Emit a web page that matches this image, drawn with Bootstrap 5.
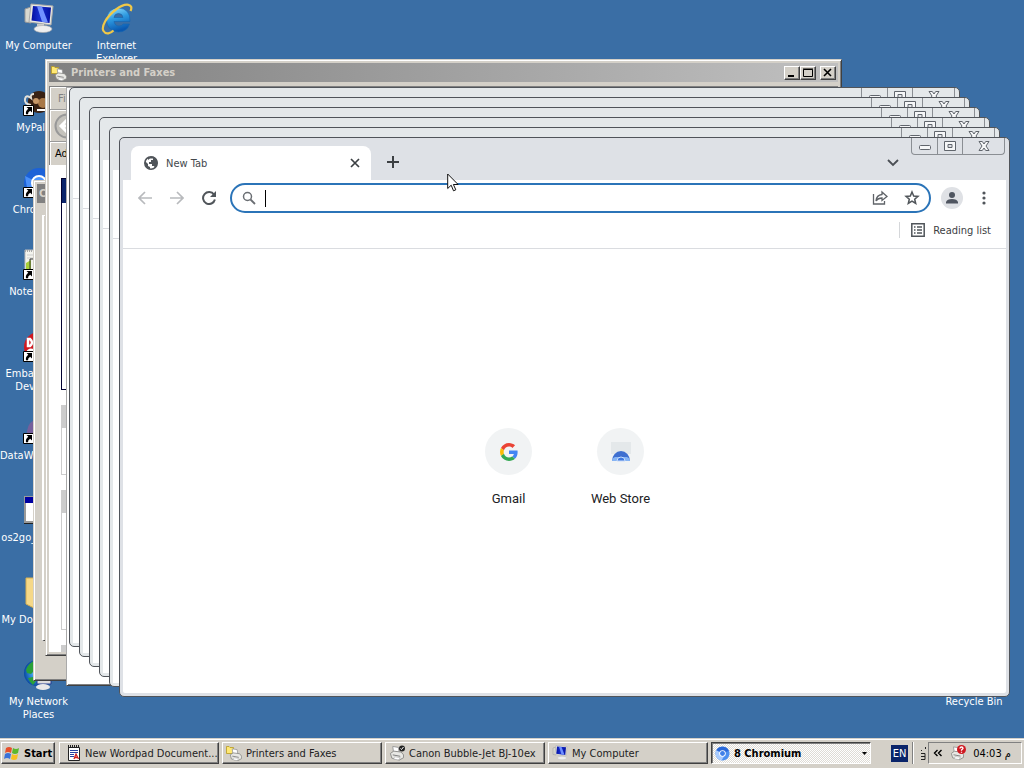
<!DOCTYPE html>
<html lang="en">
<head>
<meta charset="utf-8">
<meta name="viewport" content="width=device-width, initial-scale=1">
<title>Desktop</title>
<link href="https://cdn.jsdelivr.net/npm/bootstrap@5.3.0/dist/css/bootstrap.min.css" rel="stylesheet">
<style>
:root{--face:#d4d0c8;--desk:#3a6ea5;--ink:#3c4043}
body{font:11px/13px "DejaVu Sans Condensed","DejaVu Sans",sans-serif;color:#000;background:var(--desk)}
button,input{font:inherit;color:inherit}
button{padding:0;border:0;background:none}
svg{display:block;flex:none}
a{color:inherit;text-decoration:none}
/* desktop icons */
.icon-grid{display:grid;grid-template-rows:repeat(9,82px);grid-auto-columns:78px;grid-auto-flow:column;padding-top:3px;color:#fff}
.icon-grid a{text-align:center;width:77px}
.icon-grid svg{margin:0 auto 4px}
.icon-grid span{display:block}
.bin{right:11px;bottom:31px;width:78px;color:#fff;text-align:center}
/* classic windows */
.classic{position:absolute;background:var(--face);border:1px solid;border-color:var(--face) #404040 #404040 var(--face);box-shadow:inset 1px 1px #fff,inset -1px -1px #808080;padding:3px}
.titlebar{height:19px;flex:none;background:linear-gradient(90deg,#808080,#c0c0c0);color:#d4d0c8;font-weight:700;padding:0 2px}
.cap{width:16px;height:14px;background:var(--face);border:1px solid;border-color:#fff #404040 #404040 #fff;box-shadow:inset -1px -1px #808080}
.canon{left:33px;top:180px;bottom:58px;width:700px}
.canon .pane{margin:12px 5px 36px;border:1px solid;border-color:#fff #404040 #404040 #fff;border-left-width:2px}
.printers{left:45px;top:59px;right:182px;bottom:83px}
.menurow{height:24px;flex:none;padding-left:8px;color:#808080;border:1px solid #808080;border-bottom-color:#999;box-shadow:inset 1px 1px #fff}
.toolrow{height:32px;flex:none;padding-left:4px;border-left:1px solid #808080;border-bottom:1px solid #999;box-shadow:inset 1px 1px #fff}
.addrrow{height:23px;flex:none;padding-left:5px;border-left:1px solid #808080;box-shadow:inset 1px 1px #fff}
.throb{width:42px;align-self:stretch;background:#fff;border-left:1px solid #999}
.folder{background:#fff;padding:13px 12px 3px}
.tasks{width:190px;border:1px solid #000030;height:212px}
.tasks div{height:24px;background:#0a246a}
.pod{width:190px;border:1px solid #ccc;height:70px;margin-top:15px}
.pod.tall{height:140px}
.pod div{height:22px;background:#ccc}
.plain{left:66px;top:87px;right:100px;bottom:53px;padding:2px;background:#fff;border-color:#aaa #404040 #404040 #aaa}
/* browser windows */
.chromium{--back:50px;--frame:#e4e8ea;position:absolute;left:calc(119px - var(--back));top:calc(137px - var(--back));right:calc(14px + var(--back));bottom:calc(42px + var(--back));border:1px solid #50545a;border-radius:5px;background:var(--frame);padding:0 3px 3px}
.cascade>:nth-child(2){--back:40px}
.cascade>:nth-child(3){--back:30px}
.cascade>:nth-child(4){--back:20px}
.cascade>:nth-child(5){--back:10px}
.cascade>:nth-child(6){--back:0px;--frame:#dee1e6}
.strip{height:42px;padding-left:8px}
.winctl{right:4px;top:0;height:17px;border:1px solid #8a8e93;border-top:0;border-radius:0 0 4px 4px}
.winctl button{width:25px}
.winctl button:last-child{width:42px}
.winctl button+button{border-left:1px solid #8a8e93}
.tabpage{width:240px;height:34px;background:#fff;border-radius:8px 8px 0 0;padding:0 10px 0 13px;color:#44484c}
.tabmenu{margin-right:107px}
.tools{height:36px;background:#fff;padding:0 6px}
.tools .sq{width:32px;height:32px;display:flex;align-items:center;justify-content:center}
.omni{height:30px;border:2px solid #2b74b8;border-radius:15px;padding:0 1px 0 10px;margin:0 10px 0 5px}
.omni input{border:0;outline:0;background:none;min-width:0;font-size:13px}
.caret{width:1px;height:17px;background:#000;margin-left:9px}
.person{width:22px;height:22px;border-radius:50%;background:#dfe1e5;margin-right:5px}
.marks{height:33px;background:#fff;border-bottom:1px solid #dadce0;padding-right:15px;padding-bottom:4px;color:var(--ink)}
.marks button{border-left:1px solid #d5d7da;height:16px;padding-left:11px}
.pagebody{background:#fff;border-radius:0 0 2px 2px;padding-top:179px}
.tile{width:112px;font:13px/16px Roboto,sans-serif;color:#202124}
.disc{width:47px;height:47px;border-radius:50%;background:#f1f3f4;margin-bottom:16px}
.pointer{left:447px;top:173px}
/* taskbar */
.taskbar{height:29px;background:var(--face);border-top:1px solid #fff;padding:2px 2px 4px 1px;box-shadow:0 -1px var(--face)}
.tb{height:22px;border:1px solid;border-color:#fff #404040 #404040 #fff;box-shadow:inset -1px -1px #808080;padding:0 3px;color:#222}
.tb.start{width:54px;font-weight:700;padding:0 2px;color:#000}
.tasklist{gap:3px;min-width:0}
.tb.task{flex:0 1 160px;min-width:0}
.tb.on{border-color:#404040 #fff #fff #404040;box-shadow:inset 1px 1px #808080;background:repeating-conic-gradient(#fff 0 25%,#dedbd5 0 50%) 0 0/2px 2px;font-weight:700;color:#000}
.lang{background:#0a246a;color:#fff;width:17px;height:17px;line-height:17px;text-align:center}
.rule{width:2px;height:22px;border-left:1px solid #808080;border-right:1px solid #fff}
.tray{height:22px;width:94px;border:1px solid;border-color:#808080 #fff #fff #808080;padding:0 10px 0 4px}
</style>
</head>
<body>
<svg width="0" height="0" class="position-absolute" aria-hidden="true">
<defs>
<linearGradient id="scr" x2="1"><stop stop-color="#0410a0"/><stop offset=".4" stop-color="#1830d0"/><stop offset="1" stop-color="#0410a0"/></linearGradient>
<linearGradient id="ieb" x2=".3" y2="1"><stop stop-color="#9be4ff"/><stop offset=".5" stop-color="#2e9ae0"/><stop offset="1" stop-color="#0a58b0"/></linearGradient>
<radialGradient id="earth"><stop stop-color="#d8f4ff"/><stop offset=".4" stop-color="#3a9ae8"/><stop offset="1" stop-color="#0a4aa0"/></radialGradient>
<symbol id="arrowlink" viewBox="0 0 11 11"><path fill="#fff" stroke="#000" d="M.5.5h10v10H.5z"/><path d="M3.500 2H9v5.500L7.200 5.700Q4.800 7 5 9.300H3Q2.200 6 5.300 3.800z"/></symbol>
<symbol id="pc" viewBox="0 0 32 32"><path fill="#d8d8d0" stroke="#999" d="M2 6l6-2v16l-6-1z"/><path fill="#e8e8e0" stroke="#aaa" d="M8 1l22 2-2 19-22-3z"/><path fill="url(#scr)" d="M10 3l18 1.500L26.500 20 8.500 17.500z"/><path fill="#7090ff" d="M14 3.300l5 .5 6 15.800-6-.8z"/><path fill="#ccc" d="M14 21h7v5h-7z"/><ellipse cx="20" cy="26" rx="9" ry="3.500" fill="#eee" stroke="#aaa" stroke-width=".6"/></symbol>
<symbol id="printer" viewBox="0 0 16 16"><path fill="#fff" stroke="#999" d="M4 1l6 1 1 6-6 1z"/><path fill="#e8e8e4" stroke="#8a8a86" d="M1.500 8.500L5 6l8 1 2.500 3v3L11 15.500l-8-2z"/><path stroke="#777" d="M4 10l8 1.500"/><path fill="#fff" stroke="#aaa" stroke-width=".6" d="M6 12l6 1-2 2.500-5-1z"/></symbol>
<symbol id="folderprinter" viewBox="0 0 16 16"><path fill="#ffe874" stroke="#b89a20" stroke-width=".8" d="M.5 1.500H3l1 1h3.500v6h-7z"/><use href="#printer" x="3" y="3" width="13" height="13"/></symbol>
<symbol id="minus" viewBox="0 0 14 12"><path fill="#000" d="M3 8h6v2H3z"/></symbol>
<symbol id="wmin" viewBox="0 0 12 12"><rect x=".5" y="5.500" width="11" height="4" rx="1" fill="#f6f7f8" stroke="#60656c"/></symbol>
<symbol id="wmax" viewBox="0 0 12 12"><path fill="#f6f7f8" fill-rule="evenodd" stroke="#60656c" d="M.5 1.500h11v9H.500zM4 4.500h4v3H4z"/></symbol>
<symbol id="wx" viewBox="0 0 12 12"><path fill="#f6f7f8" stroke="#60656c" d="M1 1.500h3.300L6 4l1.700-2.500H11L8 6l3 4.500H7.700L6 8l-1.700 2.500H1L4 6z"/></symbol>
<symbol id="chrom" viewBox="0 0 16 16"><circle cx="8" cy="8" r="7.500" fill="#4c8ff0"/><path fill="#a8cbff" d="M8 8L1.500 4.500A7.500 7.500 0 0 0 7 15.400l3-5z"/><path fill="#2a68d8" d="M8 8L1.500 4.300A7.500 7.500 0 0 1 14.700 5z"/><circle cx="8" cy="8" r="3.500" fill="#fff"/><circle cx="8" cy="8" r="2.600" fill="#4080e8"/></symbol>
</defs></svg>

<div class="vh-100 d-flex flex-column overflow-hidden">
<main class="position-relative flex-grow-1 overflow-hidden">
<nav class="icon-grid" aria-label="Desktop icons">
<a href="#"><svg width="32" height="32"><use href="#pc"/></svg><span>My Computer</span></a>
<a href="#"><svg width="32" height="32" viewBox="0 0 32 32"><circle cx="16" cy="17" r="11" fill="#3a2214"/><circle cx="20" cy="18" r="5" fill="#a87848"/><circle cx="13" cy="16" r="3" fill="#c89868"/><path fill="none" stroke="#e4e0d8" stroke-width="2" d="M8 20q-7-1-6-6t6-1q-1-4 3-4"/><path stroke="#fff" stroke-width="2" d="M14 25h8"/><use href="#arrowlink" y="20" width="11" height="11"/></svg><span>MyPal 68</span></a>
<a href="#"><svg width="32" height="32" viewBox="0 0 32 32"><circle cx="16" cy="16" r="15" fill="#1c62d8"/><path fill="#4a90f8" d="M16 16L2 9l3 18z"/><circle cx="16" cy="16" r="7" fill="#4d96ff" stroke="#fff" stroke-width="2"/><use href="#arrowlink" y="20" width="11" height="11"/></svg><span>Chromium</span></a>
<a href="#"><svg width="32" height="32" viewBox="0 0 32 32"><path fill="#f4f4ee" stroke="#bbb" d="M2 1h24v29H2z"/><path stroke="#aaa" stroke-dasharray="1 1" stroke-width="2" d="M2 2h24"/><path stroke="#ccc" d="M4 6h20M4 9h20"/><path fill="#a8d038" d="M3 14l5-3v10H3z"/><path fill="none" stroke="#333" d="M7 21V10h6"/><use href="#arrowlink" y="20" width="11" height="11"/></svg><span>Notepad++</span></a>
<a href="#"><svg width="32" height="32" viewBox="0 0 32 32"><circle cx="16" cy="16" r="15" fill="#d01820"/><path fill="none" stroke="#fff" stroke-width="2.500" d="M5 8v7h2q4-3.500 0-7zM11 20q-5-3-7 2"/><use href="#arrowlink" y="20" width="11" height="11"/></svg><span>Embarcadero Dev-C++</span></a>
<a href="#"><svg width="32" height="32" viewBox="0 0 32 32"><path fill="#74609c" d="M4 18Q5 8 16 5v22H4z"/><use href="#arrowlink" y="20" width="11" height="11"/></svg><span>DataWarehouse</span></a>
<a href="#"><svg width="32" height="32" viewBox="0 0 32 32"><path fill="#fff" stroke="#999" stroke-width="2" d="M2 2h28v25H2z"/><path fill="#0000a0" d="M2 2h28v6H2z"/><path stroke="#222" d="M1 28.500h30"/></svg><span>os2go_desktop</span></a>
<a href="#"><svg width="32" height="32" viewBox="0 0 32 32"><path fill="#f5d888" stroke="#d8b050" d="M3 1h26v25l-18 5-8-4z"/></svg><span>My Documents</span></a>
<a href="#"><svg width="32" height="32" viewBox="0 0 32 32"><circle cx="14" cy="14" r="13" fill="url(#earth)"/><path fill="#2aa038" d="M3 11Q5 4 13 1l-3 6 2 4-4 4-4-1zM5 19l5-1 3 4-3 4q-3-2-5-7z"/><path fill="#ddd" stroke="#223a90" d="M14 20h14v5H14z"/><ellipse cx="20" cy="28" rx="7" ry="3" fill="#e8e8e8"/></svg><span>My Network Places</span></a>
<a href="#"><svg width="32" height="32" viewBox="0 0 32 32"><path fill="url(#ieb)" stroke="#1464b0" stroke-width=".6" fill-rule="evenodd" d="M29 18.500H13q1 4.500 5 4.500 3 0 4.200-2h6.300Q26 29 17.500 29 6 28 5.500 17 6 5.500 17.500 5 29.500 5.500 29 18.500zM13 14.500h9Q21.500 10.500 17.500 10.500T13 14.500z"/><path fill="none" stroke="#f0c848" stroke-width="2.200" d="M29.500 8C33 1 25-1 15 6.500S0 24 2.500 28s7 2.500 10-.5"/></svg><span>Internet Explorer</span></a>
</nav>
<a href="#" class="bin position-absolute">Recycle Bin</a>

<section class="classic canon d-flex flex-column" aria-label="Canon Bubble-Jet BJ-10ex">
<div class="titlebar d-flex align-items-center"><span>Canon Bubble-Jet BJ-10ex</span></div>
<div class="pane flex-grow-1"></div>
</section>

<section class="classic printers d-flex flex-column" aria-label="Printers and Faxes">
<div class="titlebar d-flex align-items-center"><svg width="16" height="16" class="me-1"><use href="#folderprinter"/></svg><span class="flex-grow-1">Printers and Faxes</span>
<button class="cap" aria-label="Minimize"><svg width="14" height="12"><use href="#minus"/></svg></button><button class="cap" aria-label="Maximize"><svg width="14" height="12" viewBox="0 0 14 12"><path fill="none" stroke="#000" d="M2.500 2.500h9v7h-9zM2 2h10"/></svg></button><button class="cap ms-1" aria-label="Close"><svg width="14" height="12" viewBox="0 0 14 12"><path stroke="#000" stroke-width="1.600" d="M3 2l7 7M10 2l-7 7"/></svg></button></div>
<div class="menurow d-flex align-items-center mt-1"><span class="flex-grow-1">File</span><span class="throb"></span></div>
<div class="toolrow d-flex align-items-center"><svg width="26" height="26" viewBox="0 0 26 26"><circle cx="13" cy="13" r="11.500" fill="#c4c2bc" stroke="#999" stroke-width="2"/><path fill="none" stroke="#fff" stroke-width="3" d="M14 6l-7 7 7 7M7 13h13"/></svg></div>
<div class="addrrow d-flex align-items-center">Address</div>
<div class="folder flex-grow-1 overflow-hidden"><div class="tasks"><div></div></div><div class="pod"><div></div></div><div class="pod tall"><div></div></div><div class="pod"><div></div></div></div>
</section>

<div class="classic plain"></div>

<div class="cascade">
<section class="chromium d-flex flex-column"><div class="strip"><div class="winctl position-absolute d-flex"><button tabindex="-1" aria-label="Minimize" class="d-flex justify-content-center align-items-center"><svg width="12" height="12"><use href="#wmin"/></svg></button><button tabindex="-1" aria-label="Maximize" class="d-flex justify-content-center align-items-center"><svg width="12" height="12"><use href="#wmax"/></svg></button><button tabindex="-1" aria-label="Close" class="d-flex justify-content-center align-items-center"><svg width="12" height="12"><use href="#wx"/></svg></button></div></div><div class="tools"></div><div class="marks"></div><div class="bg-white flex-grow-1"></div></section>
<section class="chromium d-flex flex-column"><div class="strip"><div class="winctl position-absolute d-flex"><button tabindex="-1" aria-label="Minimize" class="d-flex justify-content-center align-items-center"><svg width="12" height="12"><use href="#wmin"/></svg></button><button tabindex="-1" aria-label="Maximize" class="d-flex justify-content-center align-items-center"><svg width="12" height="12"><use href="#wmax"/></svg></button><button tabindex="-1" aria-label="Close" class="d-flex justify-content-center align-items-center"><svg width="12" height="12"><use href="#wx"/></svg></button></div></div><div class="tools"></div><div class="marks"></div><div class="bg-white flex-grow-1"></div></section>
<section class="chromium d-flex flex-column"><div class="strip"><div class="winctl position-absolute d-flex"><button tabindex="-1" aria-label="Minimize" class="d-flex justify-content-center align-items-center"><svg width="12" height="12"><use href="#wmin"/></svg></button><button tabindex="-1" aria-label="Maximize" class="d-flex justify-content-center align-items-center"><svg width="12" height="12"><use href="#wmax"/></svg></button><button tabindex="-1" aria-label="Close" class="d-flex justify-content-center align-items-center"><svg width="12" height="12"><use href="#wx"/></svg></button></div></div><div class="tools"></div><div class="marks"></div><div class="bg-white flex-grow-1"></div></section>
<section class="chromium d-flex flex-column"><div class="strip"><div class="winctl position-absolute d-flex"><button tabindex="-1" aria-label="Minimize" class="d-flex justify-content-center align-items-center"><svg width="12" height="12"><use href="#wmin"/></svg></button><button tabindex="-1" aria-label="Maximize" class="d-flex justify-content-center align-items-center"><svg width="12" height="12"><use href="#wmax"/></svg></button><button tabindex="-1" aria-label="Close" class="d-flex justify-content-center align-items-center"><svg width="12" height="12"><use href="#wx"/></svg></button></div></div><div class="tools"></div><div class="marks"></div><div class="bg-white flex-grow-1"></div></section>
<section class="chromium d-flex flex-column"><div class="strip"><div class="winctl position-absolute d-flex"><button tabindex="-1" aria-label="Minimize" class="d-flex justify-content-center align-items-center"><svg width="12" height="12"><use href="#wmin"/></svg></button><button tabindex="-1" aria-label="Maximize" class="d-flex justify-content-center align-items-center"><svg width="12" height="12"><use href="#wmax"/></svg></button><button tabindex="-1" aria-label="Close" class="d-flex justify-content-center align-items-center"><svg width="12" height="12"><use href="#wx"/></svg></button></div></div><div class="tools"></div><div class="marks"></div><div class="bg-white flex-grow-1"></div></section>

<section class="chromium d-flex flex-column" aria-label="New Tab - Chromium">
<div class="strip d-flex align-items-end">
<div class="tabpage d-flex align-items-center"><svg width="14" height="14" viewBox="0 0 14 14"><circle cx="7" cy="7" r="6.200" fill="#fff" stroke="#50555a" stroke-width="1.600"/><path fill="#50555a" d="M1 5l3 3v2l2 1v2.500Q0 12 1 5zM4 1.500L9 .5q5 2 4.500 7-.5 3-2.500 4.500L10 10H8V8H5V6h2V4h2V2.500H6L4 4z"/></svg><span class="flex-grow-1 ms-2">New Tab</span><button aria-label="Close tab"><svg width="12" height="12" viewBox="0 0 12 12"><path stroke="#3c4043" stroke-width="1.700" d="M2 2l8 8M10 2l-8 8"/></svg></button></div>
<button class="ms-3 mb-2 pb-1" aria-label="New tab"><svg width="12" height="12" viewBox="0 0 12 12"><path stroke="#3c4043" stroke-width="2" d="M6 0v12M0 6h12"/></svg></button>
<button class="tabmenu ms-auto mb-2 pb-1" aria-label="Search tabs"><svg width="12" height="10" viewBox="0 0 12 10"><path fill="none" stroke="#4a4e54" stroke-width="1.800" d="M1 2l5 5 5-5"/></svg></button>
<div class="winctl position-absolute d-flex"><button aria-label="Minimize" class="d-flex justify-content-center align-items-center"><svg width="12" height="12"><use href="#wmin"/></svg></button><button aria-label="Maximize" class="d-flex justify-content-center align-items-center"><svg width="12" height="12"><use href="#wmax"/></svg></button><button aria-label="Close" class="d-flex justify-content-center align-items-center"><svg width="12" height="12"><use href="#wx"/></svg></button></div>
</div>
<div class="tools d-flex align-items-center">
<button class="sq" aria-label="Back"><svg width="14" height="14" viewBox="0 0 14 14"><path fill="none" stroke="#b8babd" stroke-width="1.700" d="M14 7H1.500M7 1L1 7l6 6"/></svg></button>
<button class="sq" aria-label="Forward"><svg width="14" height="14" viewBox="0 0 14 14"><path fill="none" stroke="#b8babd" stroke-width="1.700" d="M0 7h12.500M7 1l6 6-6 6"/></svg></button>
<button class="sq" aria-label="Reload"><svg width="14" height="14" viewBox="0 0 14 14"><path fill="none" stroke="#50555a" stroke-width="2" d="M12 3.600A6 6 0 1 0 12.900 8.500"/><path fill="#50555a" d="M14 0v6H8z"/></svg></button>
<div class="omni d-flex align-items-center flex-grow-1">
<svg width="14" height="14" viewBox="0 0 14 14"><circle cx="5.500" cy="5.500" r="4" fill="none" stroke="#6a6e73" stroke-width="1.500"/><path stroke="#6a6e73" stroke-width="1.800" d="M8.500 8.500l4.500 4.500"/></svg>
<span class="caret"></span><input class="flex-grow-1" type="text" aria-label="Address and search bar">
<button class="sq" aria-label="Share"><svg width="16" height="16" viewBox="0 0 16 16"><path fill="none" stroke="#5f6368" stroke-width="1.300" d="M1.500 4v10h11v-3M10 2l5 4.500-5 4V8Q6 8 4 11q.5-6 6-6.500z"/></svg></button>
<button class="sq" aria-label="Bookmark this tab"><svg width="16" height="16" viewBox="0 0 16 16"><path fill="none" stroke="#50555a" stroke-width="1.500" d="M8 2l1.700 4 4.300.4-3.300 2.800 1 4.300L8 11.200l-3.700 2.300 1-4.300L2 6.400 6.300 6z"/></svg></button>
</div>
<button class="person d-flex align-items-center justify-content-center" aria-label="Profile"><svg width="14" height="14" viewBox="0 0 14 14" fill="#4f5560"><circle cx="7" cy="4" r="3"/><path d="M1 12.500V11q1-3 6-3t6 3v1.500z"/></svg></button>
<button class="sq" aria-label="Menu"><svg width="4" height="14" viewBox="0 0 4 14" fill="#50555a"><circle cx="2" cy="2" r="1.600"/><circle cx="2" cy="7" r="1.600"/><circle cx="2" cy="12" r="1.600"/></svg></button>
</div>
<div class="marks d-flex align-items-center justify-content-end">
<button class="d-flex align-items-center"><svg width="14" height="14" viewBox="0 0 14 14" class="me-2"><path fill="none" stroke="#50555a" stroke-width="1.500" d="M.8.8h12.400v12.400H.8z"/><path stroke="#50555a" stroke-width="1.500" d="M3 4h1.500M6 4h5M3 7h1.500M6 7h5M3 10h1.500M6 10h5"/></svg><span>Reading list</span></button>
</div>
<div class="pagebody flex-grow-1 d-flex justify-content-center align-items-start">
<a href="#" class="tile d-flex flex-column align-items-center"><span class="disc d-flex align-items-center justify-content-center"><svg width="18" height="18" viewBox="0 0 48 48"><path fill="#ea4335" d="M24 9.500c3.540 0 6.710 1.220 9.210 3.600l6.850-6.850C35.900 2.380 30.470 0 24 0 14.620 0 6.510 5.380 2.560 13.220l7.980 6.190C12.430 13.720 17.740 9.500 24 9.500z"/><path fill="#4285f4" d="M46.980 24.550c0-1.570-.15-3.090-.38-4.550H24v9.020h12.940c-.58 2.960-2.260 5.480-4.780 7.180l7.730 6c4.510-4.180 7.090-10.360 7.090-17.650z"/><path fill="#fbbc05" d="M10.530 28.590c-.48-1.450-.76-2.990-.76-4.590s.27-3.140.76-4.590l-7.980-6.190C.92 16.460 0 20.120 0 24c0 3.880.92 7.540 2.560 10.780l7.970-6.190z"/><path fill="#34a853" d="M24 48c6.480 0 11.930-2.130 15.890-5.810l-7.730-6c-2.150 1.450-4.920 2.300-8.160 2.300-6.260 0-11.570-4.220-13.470-9.910l-7.980 6.190C6.510 42.620 14.620 48 24 48z"/></svg></span><span>Gmail</span></a>
<a href="#" class="tile d-flex flex-column align-items-center"><span class="disc d-flex align-items-center justify-content-center"><svg width="20" height="20" viewBox="0 0 20 20"><path fill="#e4e8ea" d="M0 0h20v12H0z"/><path fill="#3f6fd0" d="M1 19a9 10 0 0 1 18 0z"/><path fill="#86b4f4" d="M1 19q0-3 3-4h12q3 1 3 4z"/><path fill="#3f78e0" stroke="#c8dcfa" d="M6 19a4 4 0 0 1 8 0z"/></svg></span><span>Web Store</span></a>
</div>
</section>
</div>
<svg class="pointer position-absolute" width="12" height="19" viewBox="0 0 12 19"><path fill="#fff" stroke="#111" d="M.7 1v14.500l3.500-3.300 2.300 5.600 2.300-1-2.400-5.300h4.700z"/></svg>
</main>

<footer class="taskbar d-flex align-items-center">
<button class="tb start d-flex align-items-center"><svg width="16" height="16" viewBox="0 0 16 16" class="me-1"><path fill="#e8502a" d="M2 3q3-2 6 0L7 8Q4 6 1 8z"/><path fill="#5cb82c" d="M9 3q3 2 6 0l-1 5q-3 2-6 0z"/><path fill="#3a72d8" d="M1 9q3-2 6 0l-1 5q-3-2-6 0z"/><path fill="#f8c020" d="M8 9q3 2 6 0l-1 5q-3 2-6 0z"/></svg>Start</button>
<div class="tasklist d-flex flex-grow-1 ms-1">
<button class="tb task d-flex align-items-center"><svg width="14" height="16" viewBox="0 0 14 16" class="mx-1"><path fill="#fff" stroke="#222" d="M1.500 2.500h11v13h-11z"/><path stroke="#222" stroke-dasharray="1 1" stroke-width="3" d="M1 1.500h12"/><path stroke="#2840a0" d="M3 5.500h8M3 7.500h8M3 9.500h4M3 11.500h4"/><path fill="none" stroke="#d02020" stroke-width="1.300" d="M7 14l2-5 2.500 5M8 12.500h3"/></svg><span class="text-nowrap">New Wordpad Document...</span></button>
<button class="tb task d-flex align-items-center"><svg width="16" height="16"><use href="#folderprinter"/></svg><span class="text-nowrap ms-1">Printers and Faxes</span></button>
<button class="tb task d-flex align-items-center"><svg width="16" height="16" viewBox="0 0 16 16"><use href="#printer" width="15" height="16"/><circle cx="13" cy="3.500" r="3" fill="#222"/><path fill="none" stroke="#fff" d="M11.500 3.500l1 1 2-2.500"/></svg><span class="text-nowrap ms-1">Canon Bubble-Jet BJ-10ex</span></button>
<button class="tb task d-flex align-items-center"><svg width="16" height="16"><use href="#pc"/></svg><span class="text-nowrap ms-1">My Computer</span></button>
<button class="tb task on d-flex align-items-center"><svg width="15" height="15"><use href="#chrom"/></svg><span class="text-nowrap ms-1 flex-grow-1 text-start">8 Chromium</span><svg width="5" height="3" viewBox="0 0 5 3"><path d="M0 0h5L2.500 3z"/></svg></button>
</div>
<span class="lang">EN</span><span class="rule ms-1"></span>
<svg class="ms-1" width="10" height="16" viewBox="0 0 10 16"><path fill="none" stroke="#222" d="M3 8.500h4v6H3M3 11.500h4M7.500 2v2M3 5.500h1"/></svg>
<span class="tray d-flex align-items-center justify-content-between"><svg width="10" height="8" viewBox="0 0 10 8"><path fill="none" stroke="#000" stroke-width="1.400" d="M4.500 1l-3 3 3 3M8.500 1l-3 3 3 3"/></svg><svg width="16" height="16" viewBox="0 0 16 16"><use href="#printer" width="14" height="16"/><circle cx="11.500" cy="4.500" r="4.500" fill="#d01820"/><path fill="none" stroke="#fff" stroke-width="1.300" d="M10 3.500q0-1.500 1.500-1.500T13 3.500L11.500 5v.8M11.500 6.700v1"/></svg><span class="text-nowrap">04:03 م</span></span>
</footer>
</div>
<script src="https://cdn.jsdelivr.net/npm/bootstrap@5.3.0/dist/js/bootstrap.bundle.min.js"></script>
</body>
</html>
